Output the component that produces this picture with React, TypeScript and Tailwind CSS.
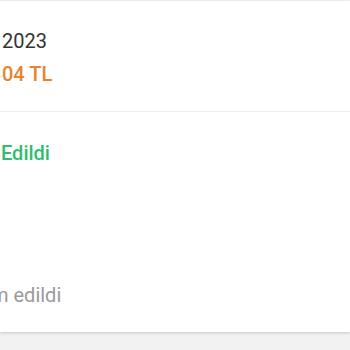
export default function App() {
  return (
    <div className="h-[350px] w-[350px] overflow-hidden bg-[#f2f2f2] font-['Roboto',sans-serif]">
      <div className="mt-px flex h-[331px] flex-col bg-white shadow-[0_1px_3px_rgba(0,0,0,0.18)]">
        <div className="flex flex-col gap-[9px] pt-[28px] pb-[25px] text-[20px] leading-[24px]">
          <div className="ml-[2px] text-[#333333]">2023</div>
          <div className="ml-[2px] font-medium text-[#e6832e]">04 TL</div>
        </div>
        <div className="h-px bg-[#ececec]" />
        <div className="pt-[29px] text-[20px] leading-[24px] font-medium text-[#2ebc6e]">
          <div className="ml-[1px]">Edildi</div>
        </div>
        <div className="mt-[118px] text-[20px] leading-[24px] text-[#9a9a9a]">
          <div className="ml-[-9px]">m edildi</div>
        </div>
      </div>
    </div>
  )
}
